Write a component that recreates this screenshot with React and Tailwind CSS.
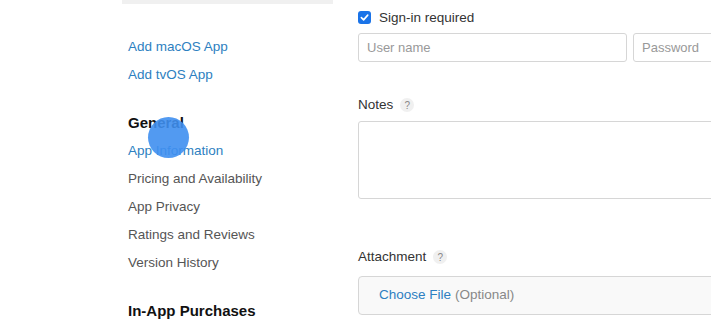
import React from 'react';

const Help = () => (
    <span className="ml-[7px] inline-flex h-[14px] w-[14px] items-center justify-center rounded-full bg-[#f0f0f0] text-[10px] text-[#888]">?</span>
);

const navGeneral = ['Pricing and Availability', 'App Privacy', 'Ratings and Reviews', 'Version History'];

export default function App() {
    return (
        <div className="relative h-[333px] w-[711px] overflow-hidden bg-white font-['Liberation_Sans',Arial,sans-serif]">
            <div className="flex pl-[122px]">
                {/* Sidebar */}
                <div className="w-[211px] shrink-0">
                    <div className="h-[4px] w-full bg-[#f0f0f0]" />
                    <div className="flex flex-col pl-[6px] text-[13.5px]">
                        <a className="mt-[29px] leading-[28px] text-[#2d7fc1]">Add macOS App</a>
                        <a className="leading-[28px] text-[#2d7fc1]">Add tvOS App</a>
                        <h3 className="mt-[20px] text-[15px] font-semibold leading-[28px] text-[#111]">General</h3>
                        <a className="leading-[28px] text-[#2d7fc1]">App Information</a>
                        {navGeneral.map((item) => (
                            <a key={item} className="leading-[28px] text-[#555]">{item}</a>
                        ))}
                        <h3 className="mt-[20px] text-[15px] font-semibold leading-[28px] text-[#111]">In-App Purchases</h3>
                    </div>
                </div>

                {/* Form */}
                <div className="ml-[25px] flex-1 text-[13.5px]">
                    <label className="mt-[10px] flex items-center text-[#333]">
                        <span className="flex h-[13px] w-[13px] items-center justify-center rounded-[3px] bg-[#1a73e8]">
                            <svg width="9" height="9" viewBox="0 0 10 10" fill="none">
                                <path d="M1.5 5.2 4 7.6 8.6 2.4" stroke="white" strokeWidth="1.8" strokeLinecap="round" strokeLinejoin="round" />
                            </svg>
                        </span>
                        <span className="ml-[8px] leading-[15px]">Sign-in required</span>
                    </label>
                    <div className="mt-[8px] flex gap-[6px] text-[13px]">
                        <div className="flex h-[29px] w-[269px] shrink-0 items-center rounded-[3px] border border-[#d6d6d6] px-[8px] text-[#999]">User name</div>
                        <div className="flex h-[29px] w-[120px] shrink-0 items-center rounded-[3px] border border-[#d6d6d6] px-[8px] text-[#999]">Password</div>
                    </div>

                    <div className="mt-[33px] flex items-center text-[#333]">
                        <span>Notes</span>
                        <Help />
                    </div>
                    <div className="mt-[6px] h-[78px] w-[400px] rounded-[3px] border border-[#d6d6d6]" />

                    <div className="mt-[48px] flex items-center text-[#333]">
                        <span>Attachment</span>
                        <Help />
                    </div>
                    <div className="mt-[8px] flex h-[39px] w-[400px] items-center rounded-[4px] border border-[#d6d6d6] bg-[#f9f9f9] pl-[20px]">
                        <span className="text-[#2d7fc1]">Choose File</span>
                        <span className="ml-[4px] text-[#888]">(Optional)</span>
                    </div>
                </div>
            </div>

            {/* click indicator */}
            <div className="absolute left-[148px] top-[117px] h-[41px] w-[41px] rounded-full bg-[#3f8ff0]/90" />
        </div>
    );
}
